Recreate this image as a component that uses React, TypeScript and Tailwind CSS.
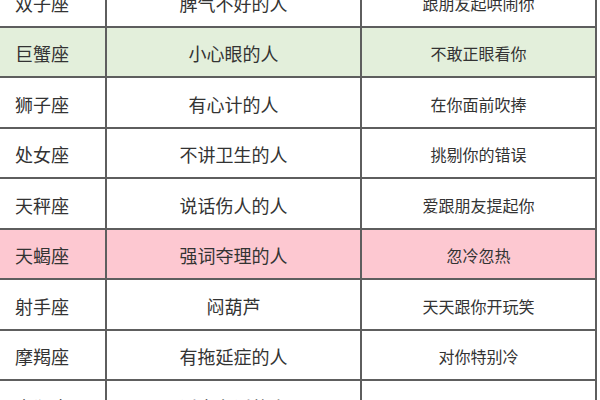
import React from "react";

const rows: { a: string; b: string; c: string; bg: string }[] = [
  { a: "双子座", b: "脾气不好的人", c: "跟朋友起哄闹你", bg: "bg-white" },
  { a: "巨蟹座", b: "小心眼的人", c: "不敢正眼看你", bg: "bg-[#e3efdb]" },
  { a: "狮子座", b: "有心计的人", c: "在你面前吹捧", bg: "bg-white" },
  { a: "处女座", b: "不讲卫生的人", c: "挑剔你的错误", bg: "bg-white" },
  { a: "天秤座", b: "说话伤人的人", c: "爱跟朋友提起你", bg: "bg-white" },
  { a: "天蝎座", b: "强词夺理的人", c: "忽冷忽热", bg: "bg-[#fdc8d1]" },
  { a: "射手座", b: "闷葫芦", c: "天天跟你开玩笑", bg: "bg-white" },
  { a: "摩羯座", b: "有拖延症的人", c: "对你特别冷", bg: "bg-white" },
  { a: "水瓶座", b: "话太有话的人", c: "常带朋友一起找你", bg: "bg-white" },
];

export default function App() {
  return (
    <div
      className="w-[600px] h-[400px] overflow-hidden bg-white text-[#333]"
      style={{ fontFamily: '"Noto Sans CJK SC", "Noto Sans", sans-serif' }}
    >
      <div className="-mt-[23px] w-[597px] border-r-2 border-[#5e5e5e]">
        {rows.map((r) => (
          <div
            key={r.a}
            className={`grid grid-cols-[107px_255px_1fr] h-[50.5px] border-b-2 border-[#5e5e5e] ${r.bg}`}
          >
            <div className="flex items-center pl-[15px] pt-[3px] border-r-2 border-[#5e5e5e] text-[18px] leading-none">
              {r.a}
            </div>
            <div className="flex items-center justify-center pt-[3px] border-r-2 border-[#5e5e5e] text-[18px] leading-none">
              {r.b}
            </div>
            <div className="flex items-center justify-center pt-[3px] text-[16px] leading-none">
              {r.c}
            </div>
          </div>
        ))}
      </div>
    </div>
  );
}
